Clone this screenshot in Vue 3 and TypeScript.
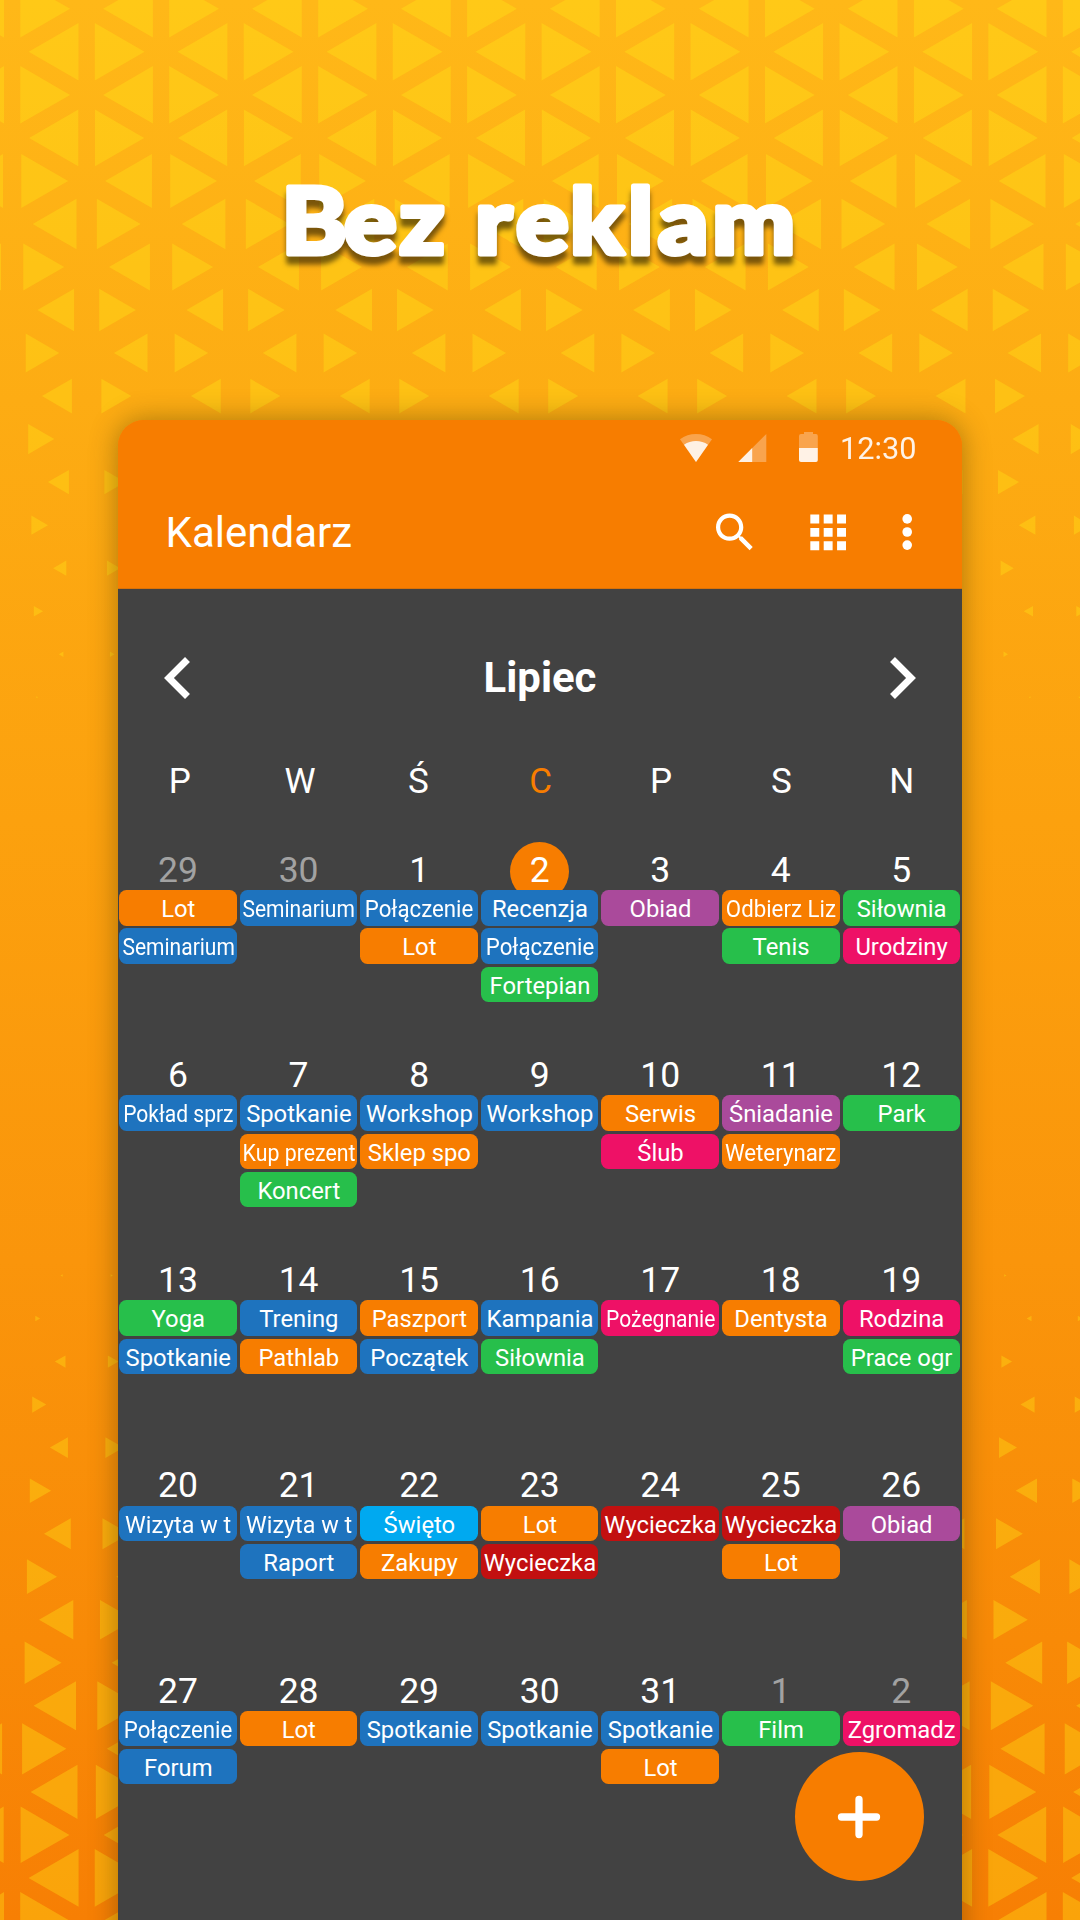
<script setup lang="ts">
interface Chip {
  text: string
  color: string
  squeeze?: number
}
interface Day {
  n: number
  off?: boolean
  today?: boolean
  chips: Chip[]
}

const O = '#f77d00'
const B = '#1e73be'
const G = '#27bf4b'
const V = '#aa4a9b'
const P = '#ee1166'
const C = '#00a9f0'
const R = '#c21010'

// Long titles are condensed so they stay inside the chip.
const squeezes: Record<string, number> = {
  Seminarium: 0.883,
  'Połączenie': 0.935,
  'Odbierz Liz': 0.935,
  'Pokład sprz': 0.885,
  'Kup prezent': 0.895,
  Weterynarz: 0.935,
  'Pożegnanie': 0.885,
  'Wizyta w t': 0.98,
}

const c = (text: string, color: string): Chip => ({ text, color, squeeze: squeezes[text] })

const weekdays = ['P', 'W', 'Ś', 'C', 'P', 'S', 'N']

const weeks: Day[][] = [
  [
    { n: 29, off: true, chips: [c('Lot', O), c('Seminarium', B)] },
    { n: 30, off: true, chips: [c('Seminarium', B)] },
    { n: 1, chips: [c('Połączenie', B), c('Lot', O)] },
    { n: 2, today: true, chips: [c('Recenzja', B), c('Połączenie', B), c('Fortepian', G)] },
    { n: 3, chips: [c('Obiad', V)] },
    { n: 4, chips: [c('Odbierz Liz', O), c('Tenis', G)] },
    { n: 5, chips: [c('Siłownia', G), c('Urodziny', P)] },
  ],
  [
    { n: 6, chips: [c('Pokład sprz', B)] },
    { n: 7, chips: [c('Spotkanie', B), c('Kup prezent', O), c('Koncert', G)] },
    { n: 8, chips: [c('Workshop', B), c('Sklep spo', O)] },
    { n: 9, chips: [c('Workshop', B)] },
    { n: 10, chips: [c('Serwis', O), c('Ślub', P)] },
    { n: 11, chips: [c('Śniadanie', V), c('Weterynarz', O)] },
    { n: 12, chips: [c('Park', G)] },
  ],
  [
    { n: 13, chips: [c('Yoga', G), c('Spotkanie', B)] },
    { n: 14, chips: [c('Trening', B), c('Pathlab', O)] },
    { n: 15, chips: [c('Paszport', O), c('Początek', B)] },
    { n: 16, chips: [c('Kampania', B), c('Siłownia', G)] },
    { n: 17, chips: [c('Pożegnanie', P)] },
    { n: 18, chips: [c('Dentysta', O)] },
    { n: 19, chips: [c('Rodzina', P), c('Prace ogr', G)] },
  ],
  [
    { n: 20, chips: [c('Wizyta w t', B)] },
    { n: 21, chips: [c('Wizyta w t', B), c('Raport', B)] },
    { n: 22, chips: [c('Święto', C), c('Zakupy', O)] },
    { n: 23, chips: [c('Lot', O), c('Wycieczka', R)] },
    { n: 24, chips: [c('Wycieczka', R)] },
    { n: 25, chips: [c('Wycieczka', R), c('Lot', O)] },
    { n: 26, chips: [c('Obiad', V)] },
  ],
  [
    { n: 27, chips: [c('Połączenie', B), c('Forum', B)] },
    { n: 28, chips: [c('Lot', O)] },
    { n: 29, chips: [c('Spotkanie', B)] },
    { n: 30, chips: [c('Spotkanie', B)] },
    { n: 31, chips: [c('Spotkanie', B), c('Lot', O)] },
    { n: 1, off: true, chips: [c('Film', G)] },
    { n: 2, off: true, chips: [c('Zgromadz', P)] },
  ],
]

// Triangle lattice: each row holds mirrored pairs, rows shrink toward the middle.
const STEP_X = 148.93
const STEP_Y = 43.03
const topSizes = [57.5, 57.5, 57.5, 56.8, 54, 50.5, 47.2, 42.4, 38.8, 34.6, 30.2, 24.2, 19.2, 15.2, 10.7, 5.3, 2]
const bottomSizes = [2.6, 5.6, 12.3, 16.2, 20.8, 24.6, 31, 34.8, 39.6, 42.6, 49, 51.1, 54.2, 56.5, 57.7, 57.7]

function triangle(cx: number, cy: number, h: number, dir: number): string {
  const w = h * 0.866
  const base = cx - (dir * w) / 3
  const tip = cx + (dir * w * 2) / 3
  return `M${base.toFixed(1)} ${(cy - h / 2).toFixed(1)}V${(cy + h / 2).toFixed(1)}L${tip.toFixed(1)} ${cy.toFixed(1)}Z`
}

function band(sizes: number[], y0: number, shift: number): string {
  let d = ''
  sizes.forEach((h, i) => {
    const wide = (i + shift) % 2 === 0
    const right = wide ? 36.9 : 111.4
    const left = wide ? 136.3 : 61.9
    for (let k = -1; k <= 7; k++) {
      d += triangle(right + k * STEP_X, y0 + i * STEP_Y, h, 1)
      d += triangle(left + k * STEP_X, y0 + i * STEP_Y, h, -1)
    }
  })
  return d
}

const pattern = band(topSizes, 8.8, 0) + band(bottomSizes, 1275.5, 1)
</script>

<template>
  <div class="page">
    <svg class="pattern" width="1080" height="1920" viewBox="0 0 1080 1920">
      <path :d="pattern" fill="#ffe818" fill-opacity="0.35" />
    </svg>
    <h1 class="headline">
      <svg width="1080" height="420" viewBox="0 0 1080 420">
        <text transform="scale(1.08 1)" x="260.6 318.5 369.6 417 439.8 477.8 527.8 581.5 609.3 659.4" y="254.5">Bez reklam</text>
      </svg>
    </h1>
    <div class="phone">
      <header class="top">
        <div class="status">
          <svg class="status-icons" width="138" height="30" viewBox="680 432 138 30">
            <path d="M680 439.3C689 432.2 703 432.2 712 439.3L696 462Z" fill="#fff" fill-opacity=".3" />
            <path d="M684 444.8C691 439.8 701 439.8 708 444.8L696 462Z" fill="#fff" fill-opacity=".85" />
            <path d="M766.3 434V462H738.3Z" fill="#fff" fill-opacity=".3" />
            <path d="M752.2 448V462H738.3Z" fill="#fff" fill-opacity=".85" />
            <path d="M804 434V432H813V434H816Q817.8 434 817.8 436V448H799V436Q799 434 801 434Z" fill="#fff" fill-opacity=".3" />
            <path d="M799 448H817.8V460Q817.8 462 816 462H801Q799 462 799 460Z" fill="#fff" fill-opacity=".9" />
          </svg>
          <span class="clock">12:30</span>
        </div>
        <div class="bar">
          <span class="app-name">Kalendarz</span>
          <svg class="tools" width="203" height="38" viewBox="712 513.5 203 38">
            <g fill="#fff">
              <path
                transform="translate(709.7 507.7) scale(2.1)"
                d="M15.5 14h-.79l-.28-.27C15.41 12.59 16 11.11 16 9.5 16 5.91 13.09 3 9.5 3S3 5.91 3 9.5 5.91 16 9.5 16c1.61 0 3.09-.59 4.23-1.57l.27.28v.79l5 4.99L20.49 19l-4.99-5zm-6 0C7.01 14 5 11.99 5 9.5S7.01 5 9.5 5 14 7.01 14 9.5 11.99 14 9.5 14z"
              />
              <path
                transform="translate(801.4 506.1) scale(2.23)"
                d="M4 8h4V4H4v4zm6 12h4v-4h-4v4zm-6 0h4v-4H4v4zm0-6h4v-4H4v4zm6 0h4v-4h-4v4zm6-10v4h4V4h-4zm-6 4h4V4h-4v4zm6 6h4v-4h-4v4zm0 6h4v-4h-4v4z"
              />
              <circle cx="907.2" cy="519.4" r="4.8" />
              <circle cx="907.2" cy="532.5" r="4.8" />
              <circle cx="907.2" cy="545.6" r="4.8" />
            </g>
          </svg>
        </div>
      </header>
      <div class="month">
        <svg width="26" height="42" viewBox="8 6 7.41 12"><path fill="#fff" d="M15.41 7.41 14 6l-6 6 6 6 1.41-1.41L10.83 12z" /></svg>
        <span>Lipiec</span>
        <svg width="26" height="42" viewBox="8.59 6 7.41 12"><path fill="#fff" d="M10 6 8.59 7.41 13.17 12l-4.58 4.59L10 18l6-6z" /></svg>
      </div>
      <div class="weekdays">
        <span v-for="(w, i) in weekdays" :key="i" :class="{ current: i === 3, mid: i === 2 }">{{ w }}</span>
      </div>
      <div v-for="(week, wi) in weeks" :key="wi" class="week">
        <div v-for="(day, di) in week" :key="di" class="day">
          <div class="num" :class="{ off: day.off, today: day.today }"><span>{{ day.n }}</span></div>
          <div v-for="(chip, ci) in day.chips" :key="ci" class="chip" :style="{ backgroundColor: chip.color }">
            <span :style="chip.squeeze ? { transform: `scaleX(${chip.squeeze})` } : undefined">{{ chip.text }}</span>
          </div>
        </div>
      </div>
      <button class="fab" aria-label="Dodaj">
        <svg width="44" height="44" viewBox="0 0 44 44"><path d="M22 4.5V39.5M4.5 22H39.5" stroke="#fff" stroke-width="7.3" stroke-linecap="round" /></svg>
      </button>
    </div>
  </div>
</template>

<style>
body {
  overflow: hidden;
}
</style>

<style scoped>
.page {
  position: relative;
  width: 1080px;
  height: 1920px;
  overflow: hidden;
  background: linear-gradient(#ffb818 0, #fdac13 400px, #fca10e 820px, #fa950b 1260px, #f88a07 1640px, #f77f04 1920px);
  font-family: Roboto, "Liberation Sans", sans-serif;
  color: #fff;
}
.pattern {
  position: absolute;
  inset: 0;
}
.headline {
  position: relative;
  margin: 0;
  height: 420px;
}
.headline svg {
  display: block;
  filter: drop-shadow(0 8px 2.5px rgba(0, 0, 0, 0.52));
}
.headline text {
  font: 900 91px Lato, sans-serif;
  fill: #fff;
  stroke: #fff;
  stroke-width: 5px;
  stroke-linejoin: round;
}
.phone {
  position: relative;
  width: 844px;
  height: 1540px;
  margin: 0 auto;
  border-radius: 26px 26px 0 0;
  background: linear-gradient(#f77d00 0, #f77d00 100px, #424242 100px);
  box-shadow: 0 0 28px rgba(60, 50, 0, 0.42);
}
.top {
  height: 169px;
  box-sizing: border-box;
  border-bottom: 1px solid #d8720a;
  border-radius: 26px 26px 0 0;
  background: #f77d00;
}
.status {
  display: flex;
  align-items: flex-start;
  justify-content: flex-end;
  height: 80px;
  padding: 12px 45.5px 0 0;
  box-sizing: border-box;
}
.clock {
  margin-left: 22.3px;
  font-size: 30.7px;
  line-height: 33px;
  opacity: 0.9;
}
.bar {
  display: flex;
  align-items: flex-start;
  justify-content: space-between;
  padding: 0 47px 0 47.6px;
}
.app-name {
  font-size: 42px;
  line-height: 65px;
}
.tools {
  margin-top: 13px;
}
.month {
  display: flex;
  align-items: center;
  justify-content: space-between;
  height: 177px;
  padding: 0 46px;
  margin-bottom: 1px;
  font-size: 41.9px;
  font-weight: 700;
}
.weekdays {
  display: grid;
  grid-template-columns: repeat(7, 1fr);
  height: 75px;
  padding: 0 0 0 1.5px;
  font-size: 35px;
  line-height: 30px;
}
.weekdays span {
  text-align: center;
}
.weekdays .current {
  color: #f77d00;
}
.weekdays .mid {
  text-indent: -4px;
}
.week {
  display: flex;
  gap: 3.07px;
  height: 205.15px;
  padding: 0 1.9px 0 1.3px;
}
.day {
  display: flex;
  flex: 1 1 0;
  min-width: 0;
  flex-direction: column;
  gap: 2.7px;
}
.num {
  position: relative;
  height: 48.2px;
  margin-bottom: -2.7px;
  text-align: center;
  font-size: 35.5px;
  line-height: 56.4px;
}
.num span {
  position: relative;
}
.off {
  color: #a2a2a2;
}
.today::before {
  content: '';
  position: absolute;
  left: 50%;
  top: 0;
  width: 59px;
  height: 59px;
  margin-left: -29.5px;
  border-radius: 50%;
  background: #f77d00;
}
.chip {
  position: relative;
  display: flex;
  justify-content: center;
  height: 35.5px;
  padding-left: 0.5px;
  border-radius: 7.5px;
  font-size: 23.8px;
  line-height: 38px;
  white-space: nowrap;
}
.fab {
  position: absolute;
  right: 38.3px;
  top: 1332px;
  display: grid;
  place-items: center;
  width: 129px;
  height: 129px;
  padding: 0;
  border: 0;
  border-radius: 50%;
  background: #f77d00;
}
</style>
